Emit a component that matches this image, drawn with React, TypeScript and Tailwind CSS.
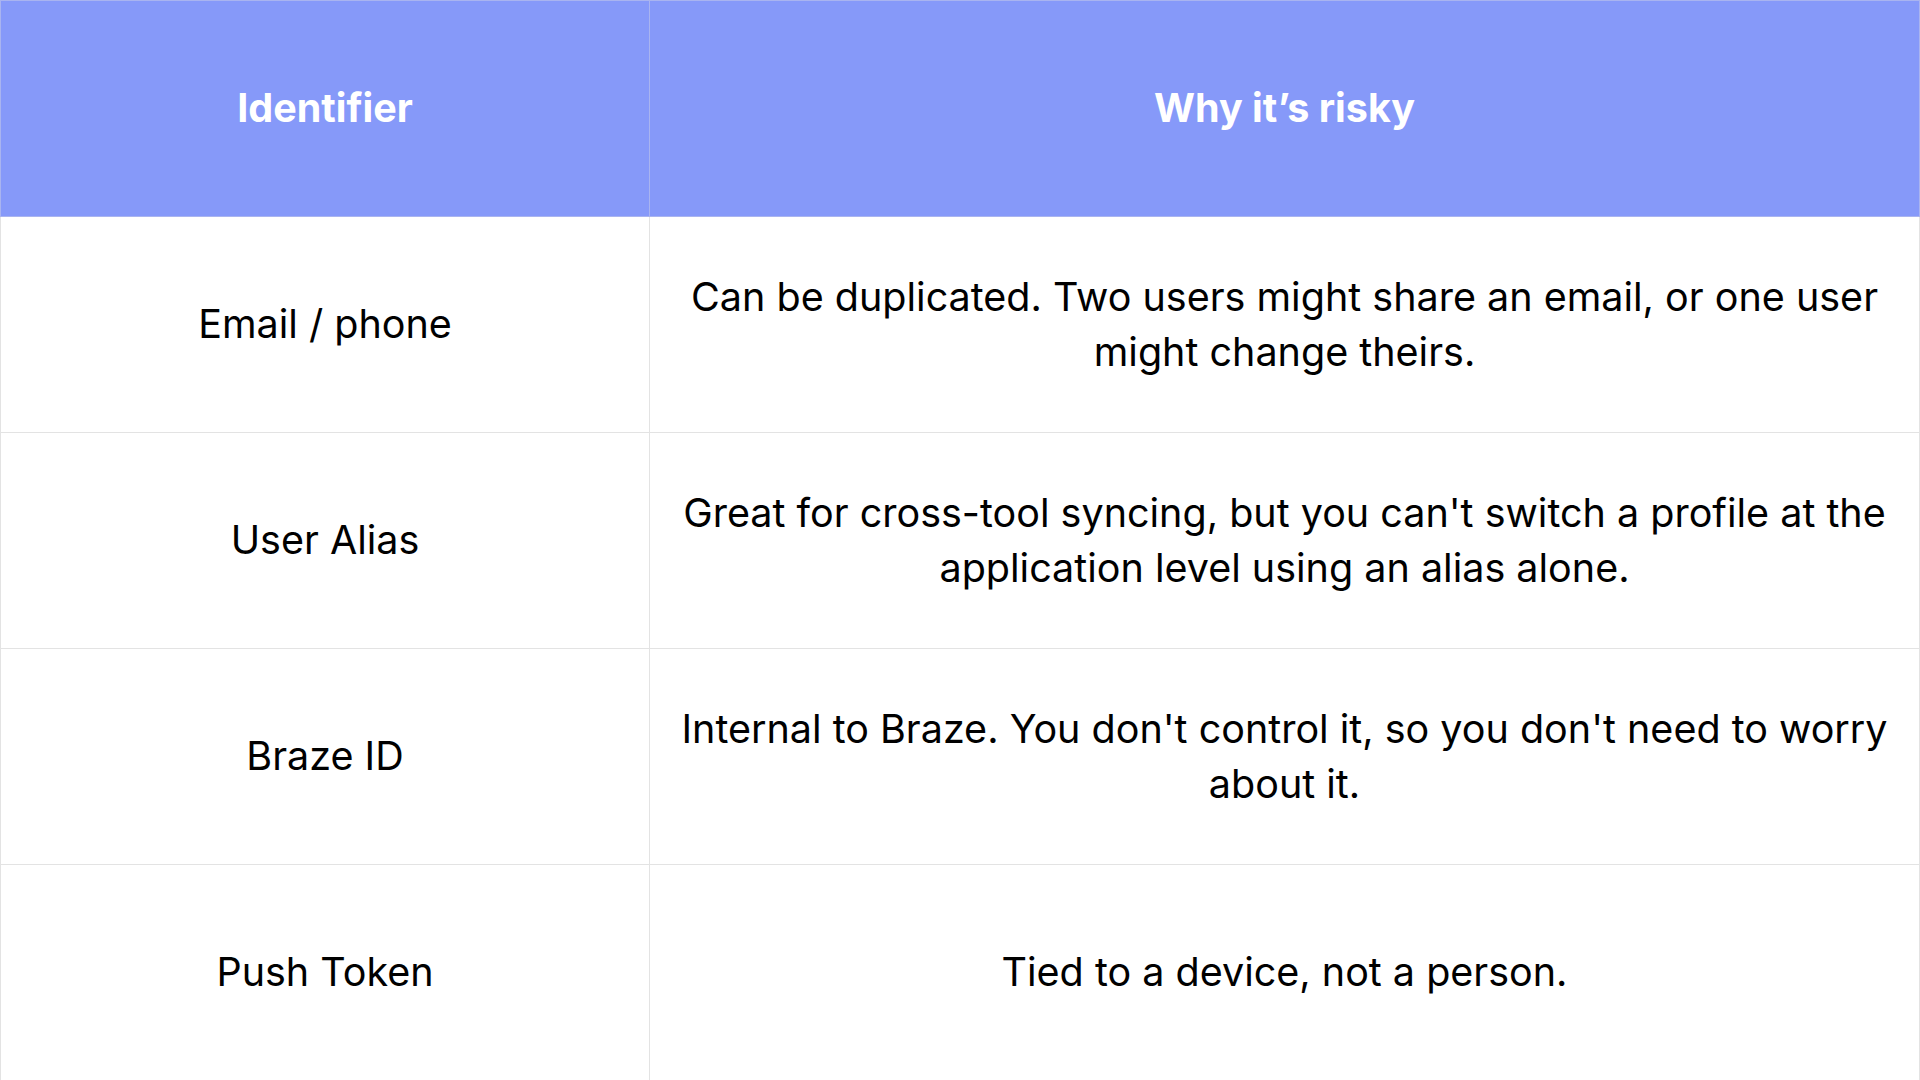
const ROWS = [
  {
    id: "Email / phone",
    why: "Can be duplicated. Two users might share an email, or one user might change theirs.",
  },
  {
    id: "User Alias",
    why: "Great for cross-tool syncing, but you can't switch a profile at the application level using an alias alone.",
  },
  {
    id: "Braze ID",
    why: "Internal to Braze. You don't control it, so you don't need to worry about it.",
  },
  {
    id: "Push Token",
    why: "Tied to a device, not a person.",
  },
];

export default function App() {
  return (
    <div className="h-[1080px] w-[1920px] bg-white font-['Inter','Liberation_Sans',sans-serif]">
      <table className="w-full table-fixed border-collapse">
        <colgroup>
          <col className="w-[649px]" />
          <col />
        </colgroup>
        <thead>
          <tr className="h-[216px] bg-[#8699f9]">
            <th className="border border-[#a9b4f0] text-[39.5px] font-bold text-white">Identifier</th>
            <th className="border border-[#a9b4f0] text-[39.5px] font-bold text-white">Why it’s risky</th>
          </tr>
        </thead>
        <tbody>
          {ROWS.map((r) => (
            <tr key={r.id} className="h-[216px]">
              <td className="border border-[#e3e3e3] px-6 text-center text-[39.5px] leading-[55px] text-black">
                {r.id}
              </td>
              <td className="border border-[#e3e3e3] px-6 text-center text-[39.5px] leading-[55px] text-black">
                {r.why}
              </td>
            </tr>
          ))}
        </tbody>
      </table>
    </div>
  );
}
